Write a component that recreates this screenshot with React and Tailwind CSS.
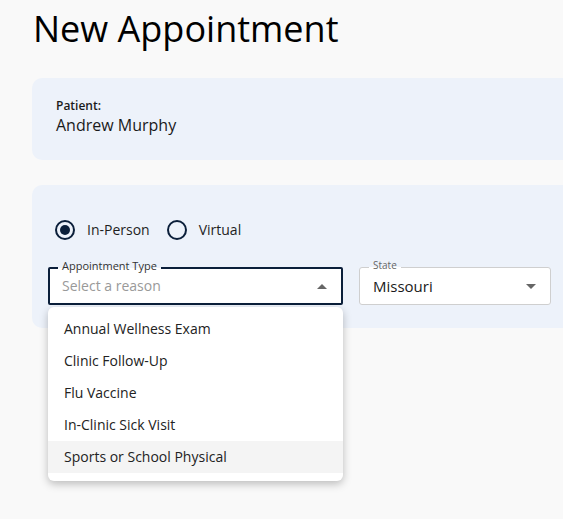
import React from 'react';

const reasons = [
    'Annual Wellness Exam',
    'Clinic Follow-Up',
    'Flu Vaccine',
    'In-Clinic Sick Visit',
    'Sports or School Physical',
];

const Radio = ({ label, checked }) => (
    <label className="flex items-center gap-3">
        <span className="w-5 h-5 rounded-full border-2 border-[#0b1f3a] flex items-center justify-center">
            {checked && <span className="w-[10px] h-[10px] rounded-full bg-[#0b1f3a]"></span>}
        </span>
        <span className="text-sm text-[#1f1f1f]">{label}</span>
    </label>
);

const App = () => {
    return (
        <div className="w-screen h-[519px] overflow-hidden bg-[#f9f9f9] font-['Open_Sans',sans-serif] text-[#1a1a1a]">
            <div className="w-[640px] pl-8 pt-[7px]">
                {/* Header */}
                <h1 className="text-[36px] leading-[43px] font-normal text-black pl-px">New Appointment</h1>

                {/* Patient card */}
                <div className="mt-7 h-[82px] bg-[#edf2fa] rounded-[10px] pl-6 pt-[21px]">
                    <p className="text-xs leading-[14px] font-semibold">Patient:</p>
                    <p className="text-base leading-6">Andrew Murphy</p>
                </div>

                {/* Visit card */}
                <div className="mt-[25px] h-[143px] bg-[#edf2fa] rounded-l-[10px] pl-4 pt-[35px]">
                    <div className="flex items-center gap-[17px] pl-[7px]">
                        <Radio label="In-Person" checked />
                        <Radio label="Virtual" />
                    </div>

                    <div className="flex gap-4 mt-[27px]">
                        {/* Appointment type */}
                        <div className="relative w-[295px] h-[38px] border-2 border-[#0b1f3a] rounded-[2px] bg-white flex items-center pl-3 pr-[14px]">
                            <span className="absolute -top-[11px] left-[8px] px-1 bg-[linear-gradient(to_bottom,#edf2fa_60%,#ffffff_60%)] text-[11px] leading-4 text-[#333]">Appointment Type</span>
                            <span className="flex-1 text-sm text-[#999]">Select a reason</span>
                            <span className="w-0 h-0 border-l-[5px] border-r-[5px] border-b-[5px] border-l-transparent border-r-transparent border-b-[#666]"></span>

                            {/* Menu */}
                            <div className="absolute left-[-2px] top-[38px] w-[295px] bg-white rounded-[6px] shadow-[0_3px_8px_rgba(0,0,0,0.25)] pt-[6px] pb-2 z-10">
                                {reasons.map((r, i) => (
                                    <div key={r} className={`h-8 flex items-center pl-4 text-sm text-[#222] ${i === reasons.length - 1 ? 'bg-[#f4f4f4]' : ''}`}>
                                        {r}
                                    </div>
                                ))}
                            </div>
                        </div>

                        {/* State */}
                        <div className="relative w-[192px] h-[38px] border border-[#cfcfcf] rounded-[3px] bg-white flex items-center pl-[13px] pr-[14px]">
                            <span className="absolute -top-[11px] left-[9px] px-1 bg-[linear-gradient(to_bottom,#edf2fa_65%,#ffffff_65%)] text-[10px] leading-4 text-[#666]">State</span>
                            <span className="flex-1 text-[15px] text-[#1a1a1a]">Missouri</span>
                            <span className="w-0 h-0 border-l-[5px] border-r-[5px] border-t-[5px] border-l-transparent border-r-transparent border-t-[#666]"></span>
                        </div>
                    </div>
                </div>
            </div>
        </div>
    );
};

export default App;
